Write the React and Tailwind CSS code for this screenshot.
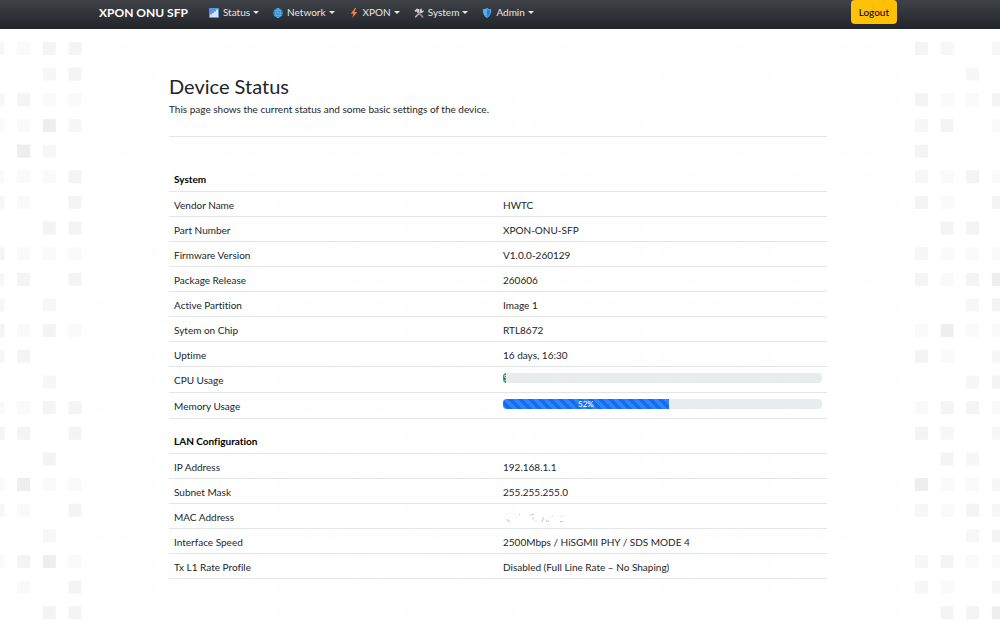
import React from 'react';
import clsx from 'clsx';

const TILE_STEP = 25.65;
const TILE_SIZE = 13;
const TILE_COLORS = [null, '#fafafa', '#f7f7f7', '#f4f4f4', '#eeeeee'];

// One string per row, one digit per column: shade index into TILE_COLORS
const LEFT_TILES = [
  '2133', '0023', '2311', '1142', '0420', '1113', '2103', '0033',
  '3111', '2303', '2020', '3131', '2300', '0020', '1133', '3303',
  '0030', '1411', '2103', '0020', '1341', '0103', '0033',
];
const RIGHT_TILES = [
  '3202', '0020', '3113', '2301', '3000', '2131', '3103', '0330',
  '2111', '3134', '0023', '1411', '3102', '0023', '1331', '3202',
  '0320', '4112', '2132', '0023', '2311', '2102', '0334',
];

const systemRows = [
  { label: 'Vendor Name', value: 'HWTC' },
  { label: 'Part Number', value: 'XPON-ONU-SFP' },
  { label: 'Firmware Version', value: 'V1.0.0-260129' },
  { label: 'Package Release', value: '260606' },
  { label: 'Active Partition', value: 'Image 1' },
  { label: 'Sytem on Chip', value: 'RTL8672' },
  { label: 'Uptime', value: '16 days, 16:30' },
  { label: 'CPU Usage', percent: 1, color: 'bg-[#198754]' },
  { label: 'Memory Usage', percent: 52, color: 'bg-[#0d6efd]' },
];

const lanRows = [
  { label: 'IP Address', value: '192.168.1.1' },
  { label: 'Subnet Mask', value: '255.255.255.0' },
  { label: 'MAC Address', value: <MaskedValue /> },
  { label: 'Interface Speed', value: '2500Mbps / HiSGMII PHY / SDS MODE 4' },
  { label: 'Tx L1 Rate Profile', value: 'Disabled (Full Line Rate – No Shaping)' },
];

const navItems = [
  { label: 'Status', Icon: ChartIcon },
  { label: 'Network', Icon: GlobeIcon },
  { label: 'XPON', Icon: BoltIcon },
  { label: 'System', Icon: ToolsIcon },
  { label: 'Admin', Icon: ShieldIcon },
];

function ChartIcon() {
  return (
    <svg viewBox="0 0 20 20" className="size-[10px]" aria-hidden="true">
      <rect width="20" height="20" rx="2" fill="#5b93e6" />
      <rect x="2.5" y="13" width="3" height="5" fill="#fff" />
      <rect x="6.5" y="10" width="3" height="8" fill="#fff" />
      <rect x="10.5" y="7" width="3" height="11" fill="#fff" />
      <rect x="14.5" y="3" width="3" height="15" fill="#fff" />
    </svg>
  );
}

function GlobeIcon() {
  return (
    <svg viewBox="0 0 20 20" className="size-[10px]" aria-hidden="true">
      <circle cx="10" cy="10" r="10" fill="#1779b5" />
      <g fill="none" stroke="#7cc6ee" strokeWidth="1.4">
        <ellipse cx="10" cy="10" rx="4.5" ry="9" />
        <path d="M10 1v18M1 10h18M2.5 5.5h15M2.5 14.5h15" />
      </g>
    </svg>
  );
}

function BoltIcon() {
  return (
    <svg viewBox="0 0 20 20" className="size-[10px]" aria-hidden="true">
      <path d="M12 0L3.500 11.500h5.500L6.500 20L16.500 8h-6L14.500 0z" fill="#f58142" />
    </svg>
  );
}

function ToolsIcon() {
  return (
    <svg viewBox="0 0 20 20" className="size-[10px]" aria-hidden="true">
      <path d="M3.500 17.500L14 6.500" stroke="#b7b2be" strokeWidth="3.400" strokeLinecap="round" />
      <path d="M12 7.500a4.500 4.500 0 0 1 4-6.500l-1 3.500 2 1.500 2.500-1.500a4.500 4.500 0 0 1-6 5z" fill="#d5d1da" />
      <path d="M8 7.500L17 17.500" stroke="#a5899b" strokeWidth="3.600" strokeLinecap="round" />
      <path d="M1 5.500L6 1l5.500 2-1 2L10 8 7.500 10 5 6.500 3 8z" fill="#d5d1da" />
    </svg>
  );
}

function ShieldIcon() {
  return (
    <svg viewBox="0 0 20 20" className="size-[10px]" aria-hidden="true">
      <path d="M10 0c2.500 2 5 2.500 8.500 2.500C18.500 11 16 16.500 10 20 4 16.500 1.500 11 1.500 2.500 5 2.500 7.500 2 10 0z" fill="#5fb2f2" />
      <path d="M10 2c2 1.300 4 2 6.500 2C16.300 11 14.500 15 10 18z" fill="#1f7fd6" />
      <path d="M10 2c-2 1.300-4 2-6.500 2C3.700 11 5.500 15 10 18z" fill="#55adf3" />
    </svg>
  );
}

function MaskedValue() {
  return (
    <svg width="62" height="10" viewBox="0 0 62 10" role="img" aria-label="Hidden">
      <g fill="none" stroke="#c4c4c4" strokeWidth="1">
        <path d="M4 6l1 2 2 .5M16 2l1-1M27 2.500l2-1.500 2 1M30 4.500v2M33 7.500v1M38 8.500l2-1V4M43 6.500l1 2 2-.5M49 3.500l1-1M57 8.500h3M58 4l1-1" />
      </g>
    </svg>
  );
}

function Tile({ col, row, fill }) {
  return (
    <rect
      x={-8.500 + col * TILE_STEP}
      y={42 + row * TILE_STEP}
      width={TILE_SIZE}
      height={TILE_SIZE}
      fill={fill}
    />
  );
}

function Backdrop() {
  const tiles = [];
  LEFT_TILES.forEach((left, row) => {
    [...left].forEach((shade, i) => {
      if (shade !== '0') {
        tiles.push(<Tile key={`l${row}-${i}`} col={i} row={row} fill={TILE_COLORS[shade]} />);
      }
    });
    [...RIGHT_TILES[row]].forEach((shade, i) => {
      if (shade !== '0') {
        tiles.push(<Tile key={`r${row}-${i}`} col={36 + i} row={row} fill={TILE_COLORS[shade]} />);
      }
    });
    // The middle of the page only keeps a trace of the pattern
    for (let col = 4; col < 36; col++) {
      if ((col * 7 + row * 5) % 4 > 1) {
        tiles.push(<Tile key={`m${row}-${col}`} col={col} row={row} fill="#fefefe" />);
      }
    }
  });

  return (
    <svg className="absolute inset-0 -z-10 h-full w-full" aria-hidden="true">
      {tiles}
    </svg>
  );
}

function Navbar() {
  return (
    <header className="bg-linear-to-b from-[#3f4347] to-[#212529] pr-1 pb-[5px]">
      <nav className="mx-auto flex h-6 w-full max-w-[798px]">
        <a href="#" className="mr-[21px] text-xs leading-[26px] font-bold text-white">XPON ONU SFP</a>
        <ul className="flex gap-3.5">
          {navItems.map(({ label, Icon }) => (
            <li key={label}>
              <button type="button" className="flex h-[25px] items-center text-[10px] text-[#e6e7e8]">
                <Icon />
                <span className="ml-1">{label}</span>
                <span className="ml-[3px] border-x-[3px] border-t-[3px] border-x-transparent border-t-current" />
              </button>
            </li>
          ))}
        </ul>
        <button type="button" className="ml-auto rounded bg-[#ffc107] px-2 pt-px text-[10px] text-black">
          Logout
        </button>
      </nav>
    </header>
  );
}

function ProgressBar({ label, percent, color }) {
  return (
    <div
      role="progressbar"
      aria-label={label}
      aria-valuenow={percent}
      className="flex h-[10px] overflow-hidden rounded bg-[#e9ecef]"
    >
      <div
        className={clsx(
          'flex items-center justify-center overflow-hidden bg-[length:10px_10px] text-[8px] leading-none text-white',
          'bg-[linear-gradient(45deg,rgba(255,255,255,.15)_25%,transparent_25%,transparent_50%,rgba(255,255,255,.15)_50%,rgba(255,255,255,.15)_75%,transparent_75%,transparent)]',
          color
        )}
        style={{ width: `${percent}%` }}
      >
        {percent}%
      </div>
    </div>
  );
}

function StatusTable({ title, rows }) {
  return (
    <table className="w-full table-fixed text-left">
      <thead>
        <tr className="border-b border-[#e3e6e9]">
          <th colSpan={2} className="h-[35px] px-[5px] pt-3 font-bold text-black">{title}</th>
        </tr>
      </thead>
      <tbody>
        {rows.map(({ label, value, percent, color }) => {
          const isUsage = percent !== undefined;
          return (
            <tr key={label} className={clsx('border-b border-[#e3e6e9]', isUsage ? 'h-[26px]' : 'h-[25px]')}>
              <th scope="row" className="px-[5px] pt-[3px] font-normal">{label}</th>
              <td className={clsx('px-[5px]', isUsage ? 'pt-[6px] align-top' : 'pt-[3px]')}>
                {isUsage ? <ProgressBar label={label} percent={percent} color={color} /> : value}
              </td>
            </tr>
          );
        })}
      </tbody>
    </table>
  );
}

export default function App() {
  return (
    <div className="relative isolate min-h-screen overflow-hidden bg-white font-['Lato',sans-serif] text-[10px] leading-[15px] text-[#212529] [font-variant-ligatures:none]">
      <Backdrop />
      <Navbar />
      <main className="pr-1 pb-12">
        <div className="mx-auto w-full max-w-[658px] pt-[45px]">
          <h1 className="text-[20px] leading-6">Device Status</h1>
          <p className="mt-1">This page shows the current status and some basic settings of the device.</p>
          <hr className="mt-[19px] mb-[19px] border-[#e3e6e9]" />
          <StatusTable title="System" rows={systemRows} />
          <StatusTable title="LAN Configuration" rows={lanRows} />
        </div>
      </main>
    </div>
  );
}
